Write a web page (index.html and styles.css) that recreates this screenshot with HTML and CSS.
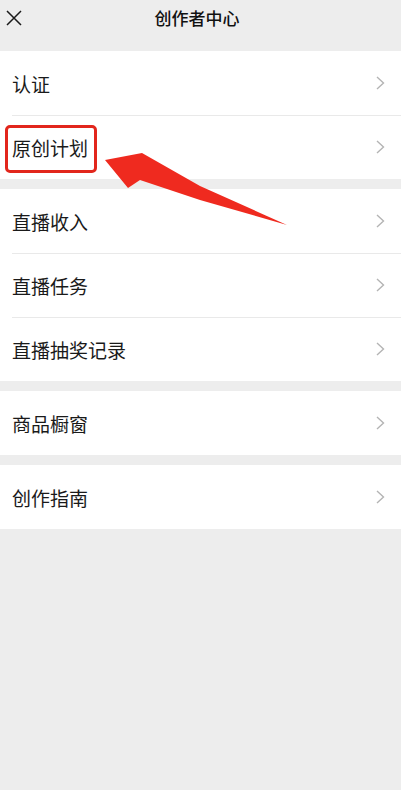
FILE: index.html
```html
<!DOCTYPE html>
<html lang="zh">
<head>
<meta charset="utf-8">
<title>创作者中心</title>
<link rel="stylesheet" href="styles.css">
</head>
<body>
<div class="page">
  <header class="nav">
    <svg class="close" width="16" height="16" viewBox="0 0 16 16"><path d="M1 1L15 15M15 1L1 15" stroke="#1a1a1a" stroke-width="1.5" fill="none"/></svg>
    <h1 class="title">创作者中心</h1>
  </header>

  <section class="group">
    <div class="row"><span class="label">认证</span><svg class="chev" width="9" height="14" viewBox="0 0 9 14"><path d="M1 1L7.5 7L1 13" stroke="#b4b4b4" stroke-width="1.4" fill="none"/></svg></div>
    <div class="row highlight"><span class="label">原创计划</span><svg class="chev" width="9" height="14" viewBox="0 0 9 14"><path d="M1 1L7.5 7L1 13" stroke="#b4b4b4" stroke-width="1.4" fill="none"/></svg><span class="mark"></span></div>
  </section>

  <section class="group">
    <div class="row"><span class="label">直播收入</span><svg class="chev" width="9" height="14" viewBox="0 0 9 14"><path d="M1 1L7.5 7L1 13" stroke="#b4b4b4" stroke-width="1.4" fill="none"/></svg></div>
    <div class="row"><span class="label">直播任务</span><svg class="chev" width="9" height="14" viewBox="0 0 9 14"><path d="M1 1L7.5 7L1 13" stroke="#b4b4b4" stroke-width="1.4" fill="none"/></svg></div>
    <div class="row"><span class="label">直播抽奖记录</span><svg class="chev" width="9" height="14" viewBox="0 0 9 14"><path d="M1 1L7.5 7L1 13" stroke="#b4b4b4" stroke-width="1.4" fill="none"/></svg></div>
  </section>

  <section class="group">
    <div class="row"><span class="label">商品橱窗</span><svg class="chev" width="9" height="14" viewBox="0 0 9 14"><path d="M1 1L7.5 7L1 13" stroke="#b4b4b4" stroke-width="1.4" fill="none"/></svg></div>
  </section>

  <section class="group">
    <div class="row"><span class="label">创作指南</span><svg class="chev" width="9" height="14" viewBox="0 0 9 14"><path d="M1 1L7.5 7L1 13" stroke="#b4b4b4" stroke-width="1.4" fill="none"/></svg></div>
  </section>

  <svg class="arrow" width="401" height="240" viewBox="0 0 401 240">
    <polygon points="105,160 142,153 200,186 287,225 200,200 140,180 128,188" fill="#ef2a1f"/>
  </svg>
</div>
</body>
</html>
```

FILE: styles.css
```css
html, body {
  margin: 0;
  padding: 0;
  background: #ededed;
}
body {
  font-family: "Noto Sans CJK SC", "Noto Sans", sans-serif;
  color: #1a1a1a;
}
.page {
  position: relative;
  width: 401px;
  min-height: 790px;
  background: #ededed;
}
.nav {
  height: 36px;
  margin-bottom: 15px;
  display: flex;
  align-items: center;
  justify-content: center;
  position: relative;
}
.close {
  position: absolute;
  left: 6px;
  top: 10px;
}
.title {
  margin: 0;
  font-size: 17px;
  font-weight: 500;
  line-height: 36px;
  padding-right: 7px;
  color: #111;
}
.group {
  background: #fff;
  margin-bottom: 10px;
}
.row {
  position: relative;
  height: 64px;
  display: flex;
  align-items: center;
  justify-content: space-between;
  padding: 0 16px 0 12px;
  box-sizing: border-box;
}
.row + .row::before {
  content: "";
  position: absolute;
  left: 12px;
  right: 0;
  top: 0;
  height: 1px;
  background: #e9e9e9;
}
.label {
  font-size: 19px;
  line-height: 1;
  color: #1a1a1a;
}
.chev {
  display: block;
}
.mark {
  position: absolute;
  left: 5px;
  top: 10px;
  width: 92px;
  height: 48px;
  box-sizing: border-box;
  border: 3px solid #e2261c;
  border-radius: 5px;
}
.arrow {
  position: absolute;
  left: 0;
  top: 0;
  pointer-events: none;
}
```
